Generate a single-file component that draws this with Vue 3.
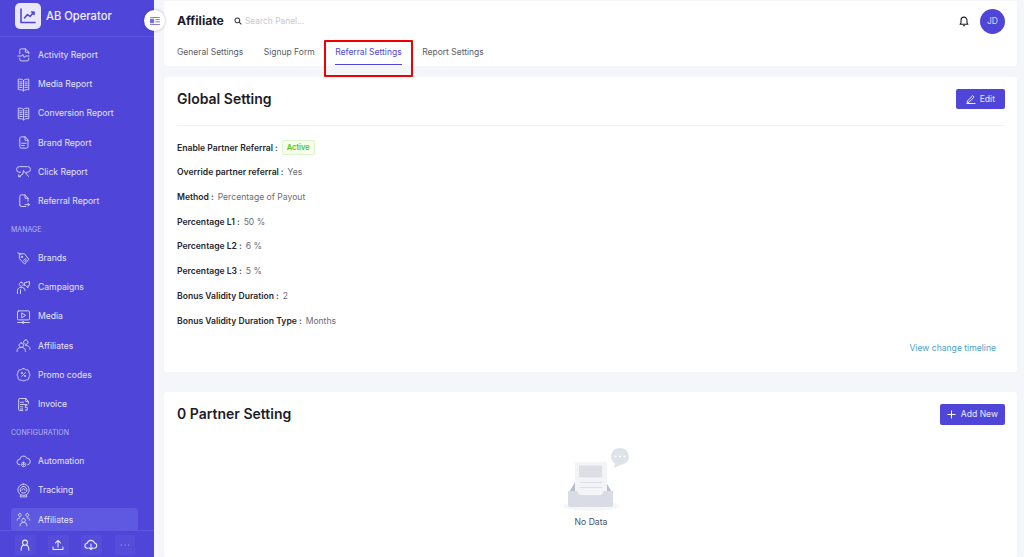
<script setup>
const group1 = [
  { label: 'Activity Report', icon: 'activity' },
  { label: 'Media Report', icon: 'book' },
  { label: 'Conversion Report', icon: 'book' },
  { label: 'Brand Report', icon: 'file' },
  { label: 'Click Report', icon: 'click' },
  { label: 'Referral Report', icon: 'referral' },
]
const group2 = [
  { label: 'Brands', icon: 'tag' },
  { label: 'Campaigns', icon: 'campaign' },
  { label: 'Media', icon: 'media' },
  { label: 'Affiliates', icon: 'people' },
  { label: 'Promo codes', icon: 'promo' },
  { label: 'Invoice', icon: 'invoice' },
]
const group3 = [
  { label: 'Automation', icon: 'cloud' },
  { label: 'Tracking', icon: 'webcam' },
  { label: 'Affiliates', icon: 'team', active: true },
]

const icons = {
  activity: 'M5 9V4.5a2 2 0 0 1 2-2h5.5L17 7v2M12.5 2.5V7H17M5 15v1.5a2 2 0 0 0 2 2h8a2 2 0 0 0 2-2V15M2.5 12h5L9 10l2 4 1.500-2h5',
  book: 'M10 4.5C8.5 3 5.5 2.5 3 3v14c2.5-.5 5.5 0 7 1.5 1.5-1.5 4.5-2 7-1.5V3c-2.5-.5-5.500 0-7 1.5zM10 4.5v14M5 6.5h3M5 9h3M5 11.5h3M5 14h3M12 6.5h3M12 9h3M12 11.5h3M12 14h3',
  file: 'M5 4.5a2 2 0 0 1 2-2h5.5L16 6.5v9a2 2 0 0 1-2 2H7a2 2 0 0 1-2-2zM12 2.5V7h4M7.5 11h6M7.5 14H11',
  click: 'M6 11H4.5a3.700 3.700 0 0 1 0-7.500h11a3.700 3.700 0 0 1 0 7.500H14M10 9l-1 4.500M10 9l3 3M9 13.500l-5 3M13 12l3.500 4.500M3.500 14.500V17H6',
  referral: 'M5 16V4.5a2 2 0 0 1 2-2h5L16 7v4M12 2.500V7h4M5 16a2 2 0 0 0 2 2h6M12 15.500h6M16 13.500l2 2-2 2',
  tag: 'M2.5 2.5l4 1.500M5 4l6-.5 6 7.500-5.500 6.500L5 10.500zM8 7a1 1 0 1 0 .1 0M10 12.500l3-2.500M11.500 14l2.500-2',
  campaign: 'M7 3a2.700 2.700 0 1 0 .1 0zM2 18v-4c0-3 2-4 5-4s5 1 5 4M6 18v-5M12 3.500L18 2v5l-2 .5v3l-3-3h-1z',
  media: 'M3.500 2.500h13A1.500 1.500 0 0 1 18 4v9a1.500 1.500 0 0 1-1.500 1.500h-13A1.500 1.500 0 0 1 2 13V4a1.500 1.500 0 0 1 1.500-1.500zM8 5.500l5 3-5 3zM2 18h16M8 18a1.500 1.500 0 1 0 0-.1',
  people: 'M7 6.500a3 3 0 1 0 .1 0zM1.500 18v-1.500C1.500 14 4 12.500 7 12.500s5.500 1.500 5.500 4V18M13 2.500a3 3 0 1 0 .1 0zM13 10c3 0 5.500 1.500 5.500 4v1',
  promo: 'M10 2c1.500 0 2 1 3 1.500s2.500 0 3.500 1 .5 2.500 1 3.500 1 1.500 1 2.500-.5 1.500-1 2.500 0 2.500-1 3.500-2.500.5-3.500 1-1.500 1-3 1-2-1-3-1-2.500 0-3.500-1-.5-2.500-1-3.500-1-1.500-1-2.500.5-1.500 1-2.500 0-2.500 1-3.500 2.500-.5 3.500-1S8.500 2 10 2zM12.500 7.500l-5 5M8 7.500a.7.7 0 1 0 .1 0zM12 11.500a.7.7 0 1 0 .1 0z',
  invoice: 'M13 2H5a1.500 1.500 0 0 0-1.500 1.500v13A1.500 1.500 0 0 0 5 18h4M13 2l3.500 4v3M13 2v4h3.500M6 7h4M6 10h8M15 11h-2.500v3H15v3.500h-2.500M6 13h3M6 16h3',
  cloud: 'M5 14.500a3.700 3.700 0 0 1 0-7.400 5 5 0 0 1 9.500-1.500 4.500 4.500 0 0 1 1 8.900M10 11a3 3 0 1 0 .1 0zM10 13a1 1 0 1 0 .1 0z',
  webcam: 'M10 1.500a7.500 7.500 0 1 0 .1 0zM10 4.500a4.500 4.500 0 1 0 .1 0zM8 9.500a2 2 0 0 1 4 0M6 16.500l-.5 2h9l-.5-2',
  team: 'M5 2a2 2 0 1 0 .1 0zM15 2a2 2 0 1 0 .1 0zM10 8.500a2.500 2.500 0 1 0 .1 0zM1.500 11c0-2 1.500-3 3.500-3M18.500 11c0-2-1.500-3-3.500-3M5.500 18.500v-1c0-2.500 2-3.500 4.500-3.500s4.500 1 4.500 3.500v1',
}
</script>

<template>
  <div class="page">
    <aside class="sidebar">
      <div class="logo-row">
        <div class="logo-box">
          <svg width="20" height="20" viewBox="0 0 20 20" fill="none" stroke="#4f46d9" stroke-width="1.6" stroke-linecap="round" stroke-linejoin="round">
            <path d="M3 3v13.500h14M6.500 12l3-3.500 2.500 2 4-4.500M13.500 6H16v2.500" />
          </svg>
        </div>
        <span class="logo-text">AB Operator</span>
      </div>
      <button class="collapse">
        <svg width="10" height="8" viewBox="0 0 11 9" fill="none" stroke="#6f69d8" stroke-width="1">
          <path d="M0 .5h11M6 3h5M6 5.500h5M0 8.500h11" />
          <path d="M0 2.500h4v4H0z" fill="#6f69d8" />
        </svg>
      </button>
      <nav class="menu">
        <a v-for="item in group1" :key="item.label" class="menu-item">
          <svg class="menu-icon" viewBox="0 0 20 20"><path :d="icons[item.icon]" /></svg>
          <span>{{ item.label }}</span>
        </a>
        <div class="menu-title">MANAGE</div>
        <a v-for="item in group2" :key="item.label" class="menu-item">
          <svg class="menu-icon" viewBox="0 0 20 20"><path :d="icons[item.icon]" /></svg>
          <span>{{ item.label }}</span>
        </a>
        <div class="menu-title">CONFIGURATION</div>
        <a v-for="item in group3" :key="item.label" class="menu-item" :class="{ active: item.active }">
          <svg class="menu-icon" viewBox="0 0 20 20"><path :d="icons[item.icon]" /></svg>
          <span>{{ item.label }}</span>
        </a>
      </nav>
      <div class="side-footer">
        <button class="foot-btn">
          <svg viewBox="0 0 20 20"><path d="M10 3a3.500 3.500 0 0 1 3.500 3.500c0 2-1.500 4-3.500 4s-3.500-2-3.500-4A3.500 3.500 0 0 1 10 3zM4.500 17.500c0-4 2-7 3.500-7.500M15.500 17.500c0-4-2-7-3.500-7.500" /></svg>
        </button>
        <button class="foot-btn">
          <svg viewBox="0 0 20 20"><path d="M3 13v3.500h14V13M10 13V3.500M6.500 7L10 3.500 13.500 7" /></svg>
        </button>
        <button class="foot-btn">
          <svg viewBox="0 0 20 20"><path d="M6 14.500H5a3.500 3.500 0 0 1-.5-7 5.500 5.500 0 0 1 10.500-.5 3.800 3.800 0 0 1 0 7.500h-1M10 8.500v8M7.500 14l2.500 2.500 2.500-2.500" /></svg>
        </button>
        <button class="foot-btn dim">
          <svg viewBox="0 0 20 20"><path d="M4.500 10h.5M10 10h.5M15 10h.5" /></svg>
        </button>
      </div>
    </aside>

    <main class="main">
      <header class="top-card">
        <div class="top-row">
          <h1 class="page-title">Affiliate</h1>
          <div class="search">
            <svg width="8" height="8" viewBox="0 0 10 10" fill="none" stroke="#33343f" stroke-width="1.3"><circle cx="4.200" cy="4.200" r="3" /><path d="M6.500 6.500l2.700 2.700" /></svg>
            <span>Search Panel...</span>
          </div>
          <div class="top-right">
            <svg width="10" height="11" viewBox="0 0 11 12" fill="none" stroke="#1c1d28" stroke-width="1.2" stroke-linejoin="round">
              <path d="M1.200 9h8.600L8.800 7.500v-3a3.300 3.300 0 0 0-6.600 0v3zM4.300 10.700h2.400" />
            </svg>
            <div class="avatar">JD</div>
          </div>
        </div>
        <div class="tabs">
          <a class="tab">General Settings</a>
          <a class="tab">Signup Form</a>
          <a class="tab tab-active">Referral Settings<span class="red-box"></span></a>
          <a class="tab">Report Settings</a>
        </div>
      </header>

      <section class="card global-card">
        <div class="card-head">
          <h2>Global Setting</h2>
          <button class="primary edit">
            <svg width="10" height="10" viewBox="0 0 10 10" fill="none" stroke="#fff" stroke-width=".9" stroke-linejoin="round"><path d="M1.500 7l5-5.500L8 3 3 8.300l-1.800.2zM.5 9.500h9" /></svg>
            Edit
          </button>
        </div>
        <div class="fields">
          <div class="field"><b>Enable Partner Referral</b><i>:</i><span class="tag">Active</span></div>
          <div class="field"><b>Override partner referral</b><i>:</i><span>Yes</span></div>
          <div class="field"><b>Method</b><i>:</i><span>Percentage of Payout</span></div>
          <div class="field"><b>Percentage L1</b><i>:</i><span>50 %</span></div>
          <div class="field"><b>Percentage L2</b><i>:</i><span>6 %</span></div>
          <div class="field"><b>Percentage L3</b><i>:</i><span>5 %</span></div>
          <div class="field"><b>Bonus Validity Duration</b><i>:</i><span>2</span></div>
          <div class="field"><b>Bonus Validity Duration Type</b><i>:</i><span>Months</span></div>
        </div>
        <a class="timeline">View change timeline</a>
      </section>

      <section class="card partner-card">
        <div class="partner-head">
          <h2>0 Partner Setting</h2>
          <button class="primary add">
            <svg width="9" height="9" viewBox="0 0 9 9" fill="none" stroke="#fff" stroke-width="1"><path d="M4.500.5v8M.5 4.500h8" /></svg>
            Add New
          </button>
        </div>
        <div class="empty">
          <svg width="76" height="66" viewBox="0 0 76 66">
            <ellipse cx="38" cy="59" rx="28" ry="5" fill="#f5f6f9" />
            <path d="M15 47l7-12h31l7 12z" fill="#b9bfcb" />
            <rect x="22" y="15" width="32" height="37" fill="#f3f4f7" />
            <rect x="26" y="18.500" width="23" height="12" fill="#dcdfe6" />
            <path d="M27 35h22v1H27zM27 40h22v1H27z" fill="#dcdfe6" />
            <path d="M15 44h10a3 3 0 0 0 3 4h19a3 3 0 0 0 3-4h10v14a2 2 0 0 1-2 2H17a2 2 0 0 1-2-2z" fill="#d9dce4" />
            <path d="M67 1a9 8.500 0 0 1 0 17l-6 3 1-4.500A9 8.500 0 0 1 67 1z" fill="#dfe2e8" />
            <circle cx="62.500" cy="9.500" r="1" fill="#fff" /><circle cx="67" cy="9.500" r="1" fill="#fff" /><circle cx="71.500" cy="9.500" r="1" fill="#fff" />
          </svg>
          <span>No Data</span>
        </div>
      </section>
    </main>
  </div>
</template>

<style>
html, body { margin: 0; height: 100%; overflow: hidden; }
</style>

<style scoped>
.page {
  display: flex;
  height: 557px;
  overflow: hidden;
  background: #f5f6fa;
  font-family: "Inter", "Liberation Sans", sans-serif;
  color: #1c1d28;
}
.sidebar {
  position: relative;
  flex: 0 0 154px;
  display: flex;
  flex-direction: column;
  background: #4f46d9;
  color: #e6e4fb;
}
.logo-row {
  display: flex;
  align-items: center;
  gap: 5px;
  height: 36px;
  padding-left: 15px;
  border-bottom: 1px solid #5e56df;
}
.logo-box {
  width: 26px;
  height: 26px;
  margin-top: -4px;
  border-radius: 5px;
  background: #e9e7fb;
  display: flex;
  align-items: center;
  justify-content: center;
}
.logo-text {
  margin-top: -4px;
  font-size: 11.2px;
  font-weight: 500;
  color: #f1f0fd;
}
.collapse {
  position: absolute;
  top: 10px;
  left: 144px;
  width: 21px;
  height: 21px;
  padding: 0;
  border: 0;
  border-radius: 50%;
  background: #fff;
  box-shadow: 0 0 3px rgba(40, 40, 80, .3);
  display: flex;
  align-items: center;
  justify-content: center;
}
.menu {
  flex: 1;
  overflow: hidden;
  padding: 3.4px 16px 0 11px;
  min-height: 0;
}
.menu-item {
  display: flex;
  align-items: center;
  gap: 7px;
  height: 29.2px;
  padding-left: 5px;
  border-radius: 4px;
  font-size: 8.6px;
}
.menu-item.active {
  background: #5f58e0;
  margin-top: 3px;
  height: 23px;
}
.menu-icon {
  flex: none;
  width: 15px;
  height: 15px;
  fill: none;
  stroke: #dcdaf8;
  stroke-width: 1.2;
  stroke-linecap: round;
  stroke-linejoin: round;
}
.menu-title {
  display: flex;
  align-items: center;
  height: 28px;
  font-size: 7px;
  color: #b8b4f1;
}
.side-footer {
  flex: 0 0 27px;
  box-sizing: border-box;
  display: flex;
  align-items: flex-start;
  gap: 12.7px;
  padding: 4px 0 0 15px;
  border-top: 1px solid #5e56df;
  background: #4f46d9;
}
.foot-btn {
  width: 20.5px;
  height: 20px;
  padding: 3px;
  border: 0;
  border-radius: 2px;
  background: #554dda;
}
.foot-btn svg {
  display: block;
  width: 14px;
  height: 14px;
  fill: none;
  stroke: #eeedfc;
  stroke-width: 1.5;
  stroke-linecap: round;
  stroke-linejoin: round;
}
.foot-btn.dim svg { stroke: #a5a0ee; }
.main {
  flex: 1;
  min-width: 0;
  padding: 1px 7px 0 10px;
  display: flex;
  flex-direction: column;
}
.top-card {
  flex: 0 0 65px;
  background: #fff;
  border-radius: 0 0 3px 3px;
  padding: 0 12px 0 13px;
  margin-bottom: 11px;
}
.top-row {
  display: flex;
  align-items: center;
  height: 40px;
}
.page-title {
  margin: -2px 0 0;
  width: 57px;
  font-size: 12.2px;
  font-weight: 700;
}
.search {
  display: flex;
  align-items: center;
  gap: 3px;
  font-size: 8.4px;
  color: #c6c8cf;
}
.top-right {
  margin-left: auto;
  display: flex;
  align-items: center;
  gap: 11px;
}
.avatar {
  width: 25px;
  height: 25px;
  border-radius: 50%;
  background: #4f46d9;
  color: #dcdaf8;
  font-size: 8.5px;
  display: flex;
  align-items: center;
  justify-content: center;
}
.tabs {
  display: flex;
  gap: 20.5px;
  height: 25px;
}
.tab {
  position: relative;
  box-sizing: border-box;
  height: 24px;
  padding-top: 6px;
  font-size: 8.5px;
  color: #5b5d68;
}
.tab-active {
  color: #4f46d9;
  border-bottom: 1.5px solid #4f46d9;
}
.red-box {
  position: absolute;
  top: -1px;
  left: -11px;
  right: -11px;
  height: 37px;
  box-sizing: border-box;
  border: 2px solid #f00000;
  border-radius: 1px;
}
.card {
  background: #fff;
  border-radius: 3px;
  padding: 0 12px 0 13px;
}
.global-card {
  flex: 0 0 295px;
  margin-bottom: 20px;
  box-sizing: border-box;
}
.card-head {
  display: flex;
  align-items: center;
  justify-content: space-between;
  box-sizing: border-box;
  height: 49px;
  padding-bottom: 5px;
  border-bottom: 1px solid #f0f1f4;
}
h2 {
  margin: 0;
  font-size: 14px;
  font-weight: 600;
  color: #1c1d28;
}
.primary {
  display: flex;
  align-items: center;
  justify-content: center;
  height: 20px;
  border: 0;
  border-radius: 2px;
  background: #4f46d9;
  color: #e9e7fb;
  font: inherit;
  font-size: 8.6px;
}
.edit {
  gap: 4px;
  padding: 0 10px;
}
.add {
  gap: 4.5px;
  padding: 0 7px;
}
.fields {
  padding-top: 9.4px;
}
.field {
  display: flex;
  align-items: center;
  height: 24.7px;
  font-size: 8.6px;
  color: #6a6c76;
}
.field b {
  font-weight: 600;
  color: #26272f;
}
.field i {
  font-style: normal;
  font-weight: 600;
  color: #26272f;
  margin: 0 4px 0 2px;
}
.tag {
  font-size: 7.5px;
  font-weight: 600;
  color: #52c41a;
  background: #f6ffed;
  border: 1px solid #dff5cb;
  border-radius: 2px;
  padding: 2px 4px;
}
.timeline {
  display: block;
  margin-top: 10px;
  padding-right: 9px;
  text-align: right;
  font-size: 8.6px;
  color: #4a9fc8;
}
.partner-card {
  flex: 1;
}
.partner-head {
  display: flex;
  align-items: center;
  justify-content: space-between;
  height: 44px;
}
.partner-head h2 {
  margin-top: -2px;
}
.partner-head .primary {
  height: 21px;
}
.empty {
  display: flex;
  flex-direction: column;
  align-items: center;
  margin-top: 11px;
  font-size: 8.6px;
  color: #4e505a;
}
.empty span {
  margin-top: 4px;
}
</style>
